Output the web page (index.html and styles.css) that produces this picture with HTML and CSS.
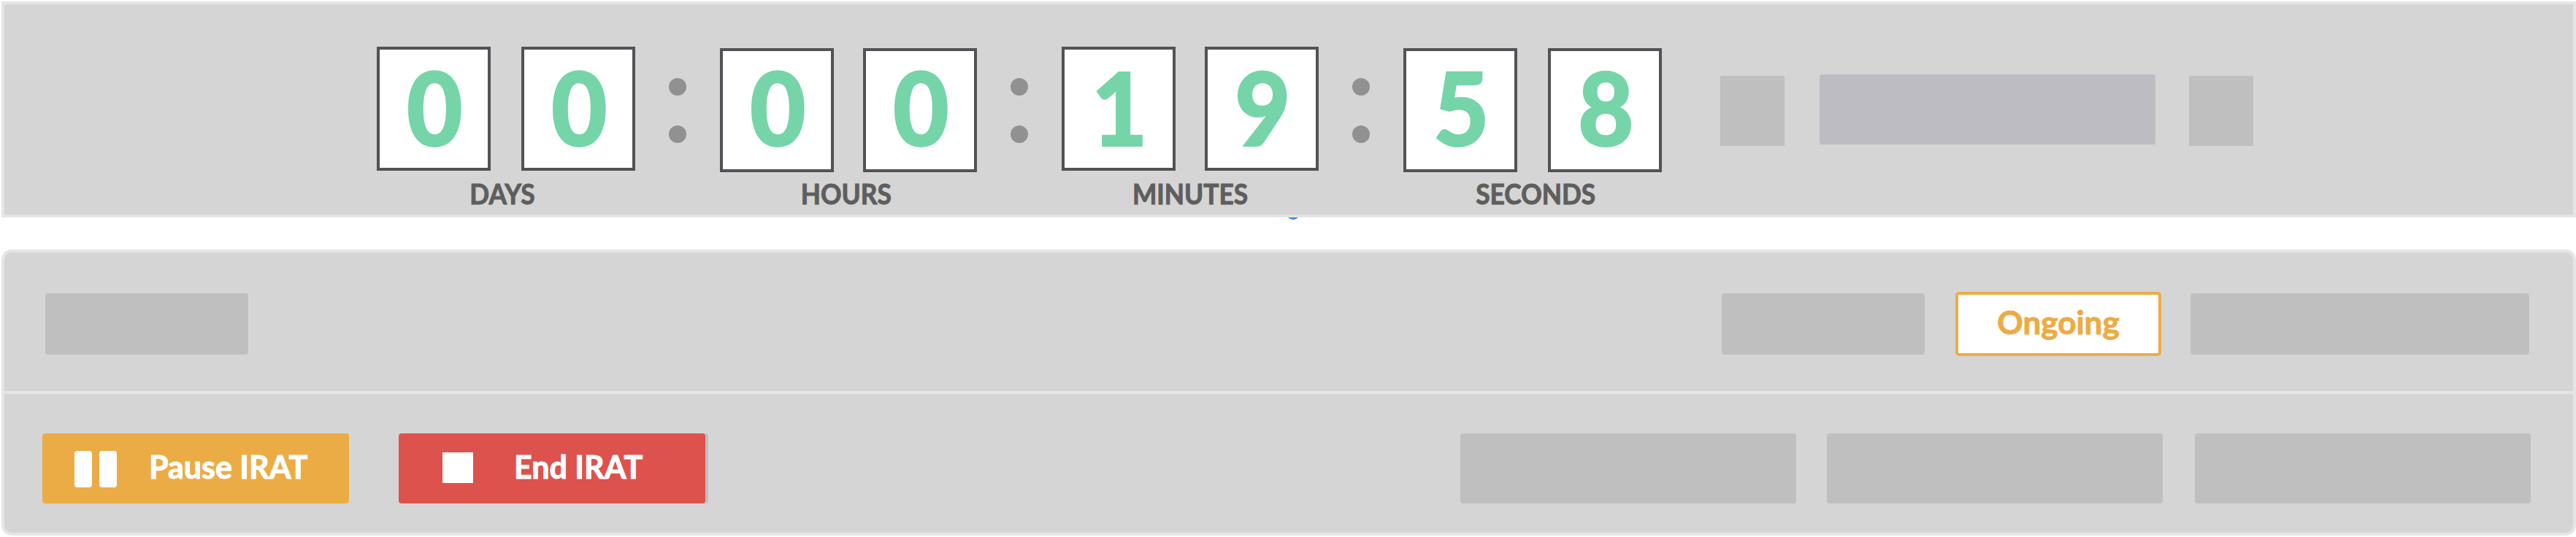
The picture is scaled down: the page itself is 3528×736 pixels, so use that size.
FILE: index.html
```html
<!DOCTYPE html>
<html lang="en">
<head>
    <meta charset="UTF-8">
    <meta name="viewport" content="width=device-width, initial-scale=1.0">
    <title>IRAT Timer</title>
    <link rel="stylesheet" href="styles.css">
</head>
<body>
    <div class="timer-panel">
        <div class="group days">
            <div class="digits">
                <div class="digit"><span>0</span></div>
                <div class="digit"><span>0</span></div>
            </div>
            <div class="label"><span>DAYS</span></div>
        </div>
        <div class="separator"><i></i><i></i></div>
        <div class="group hours low">
            <div class="digits">
                <div class="digit"><span>0</span></div>
                <div class="digit"><span>0</span></div>
            </div>
            <div class="label"><span>HOURS</span></div>
        </div>
        <div class="separator"><i></i><i></i></div>
        <div class="group minutes">
            <div class="digits">
                <div class="digit"><span>1</span></div>
                <div class="digit"><span>9</span></div>
            </div>
            <div class="label"><span>MINUTES</span></div>
        </div>
        <div class="separator"><i></i><i></i></div>
        <div class="group seconds low">
            <div class="digits">
                <div class="digit"><span>5</span></div>
                <div class="digit"><span>8</span></div>
            </div>
            <div class="label"><span>SECONDS</span></div>
        </div>
        <div class="adjust">
            <div class="block square"></div>
            <div class="block input"></div>
            <div class="block square"></div>
        </div>
    </div>

    <div class="marker"><i></i></div>

    <div class="control-panel">
        <div class="row status-row">
            <div class="block small"></div>
            <div class="right">
                <div class="block small"></div>
                <div class="status"><span>Ongoing</span></div>
                <div class="block large"></div>
            </div>
        </div>
        <div class="row button-row">
            <button class="btn pause">
                <svg width="58" height="50" viewBox="0 0 58 50">
                    <rect width="24" height="50" rx="4" fill="#fff"/>
                    <rect x="34" width="24" height="50" rx="4" fill="#fff"/>
                </svg>
                <span>Pause IRAT</span>
            </button>
            <button class="btn end">
                <svg width="42" height="42" viewBox="0 0 42 42">
                    <rect width="42" height="42" fill="#fff"/>
                </svg>
                <span>End IRAT</span>
            </button>
            <div class="right">
                <div class="block action"></div>
                <div class="block action"></div>
                <div class="block action last"></div>
            </div>
        </div>
    </div>
</body>
</html>
```
FILE: styles.css
```css
* {
    box-sizing: border-box;
}
body {
    margin: 0;
    padding: 2px 0 0 2px;
    height: 736px;
    overflow: hidden;
    background-color: white;
    font-family: Lato, sans-serif;
    font-weight: bold;
}
.timer-panel {
    display: flex;
    align-items: flex-start;
    height: 296px;
    padding: 58px 0 0 510px;
    border: 4px solid #e5e5e5;
    background-color: #d5d5d5;
}
.digits {
    display: flex;
    gap: 40px;
}
.days .digits, .seconds .digits {
    gap: 42px;
}
.digit {
    width: 156px;
    height: 170px;
    border: 4px solid #525256;
    background-color: white;
    color: #75d5a8;
    font-size: 139px;
    font-weight: 900;
    line-height: 158px;
    text-align: center;
    -webkit-text-stroke: 2px #75d5a8;
}
.digit span {
    display: inline-block;
    margin-left: 2px;
    transform: scaleX(0.95);
}
.low .digits {
    padding-top: 2px;
}
.low .digit {
    line-height: 154px;
}
.label {
    height: 46px;
    margin-top: 8px;
    color: #5e5e5e;
    font-size: 38px;
    line-height: 46px;
    text-align: center;
    -webkit-text-stroke: 1px #5e5e5e;
}
.low .label {
    margin-top: 6px;
}
.label span, .status span, .btn span {
    display: inline-block;
}
.label span {
    transform: scaleX(0.93);
}
.days .label {
    padding-right: 10px;
}
.hours .label {
    padding-right: 6px;
}
.seconds .label {
    padding-left: 8px;
}
.separator {
    display: flex;
    flex-direction: column;
    align-items: center;
    gap: 41px;
    width: 116px;
    padding-top: 43px;
}
.separator i {
    width: 24px;
    height: 24px;
    border-radius: 50%;
    background-color: #919191;
}
.adjust {
    display: flex;
    align-items: center;
    height: 96px;
    margin: 40px 0 0 80px;
}
.block {
    height: 84px;
    border-radius: 4px;
    background-color: #bfbfbf;
}
.square {
    width: 88px;
    height: 96px;
    border-radius: 0;
}
.input {
    width: 460px;
    height: 96px;
    margin: -4px 46px 0 48px;
    background-color: #bdbcc2;
}
/* only the bottom edge of the dot shows below the timer */
.marker {
    height: 44px;
    overflow: hidden;
}
.marker i {
    display: block;
    width: 20px;
    height: 20px;
    margin: -17px 0 0 1759px;
    border-radius: 50%;
    background-color: #3b82f6;
}
.control-panel {
    height: 392px;
    border: 4px solid #e5e5e5;
    border-radius: 14px;
    background-color: #d5d5d5;
}
.row {
    display: flex;
    align-items: center;
}
.right {
    display: flex;
    align-items: center;
    margin-left: auto;
}
.status-row {
    height: 194px;
    padding: 6px 60px 0 56px;
    border-bottom: 4px solid #e5e5e5;
}
.small {
    width: 278px;
}
.status {
    width: 282px;
    height: 88px;
    margin: 0 40px 0 42px;
    border: 4px solid #ecac45;
    border-radius: 5px;
    background-color: white;
    color: #ecac45;
    font-size: 44px;
    line-height: 74px;
    text-align: center;
    -webkit-text-stroke: 1px #ecac45;
}
.large {
    width: 464px;
}
.button-row {
    align-items: flex-start;
    height: 190px;
    padding: 54px 58px 0 52px;
}
.btn {
    display: flex;
    align-items: center;
    width: 420px;
    height: 96px;
    padding: 0;
    border: none;
    border-radius: 4px;
    color: white;
    font-family: inherit;
    font-size: 43px;
    font-weight: bold;
    line-height: 90px;
    text-align: left;
    white-space: nowrap;
    -webkit-text-stroke: 1px white;
}
.pause {
    padding: 2px 0 0 44px;
    background-color: #ecac45;
}
.pause span {
    margin: -6px 0 0 44px;
}
.end {
    margin-left: 68px;
    padding: 0 0 2px 60px;
    background-color: #de524d;
    box-shadow: 4px 0 0 #bfbfbf;
}
.end span {
    margin: -2px 0 0 56px;
}
.action {
    width: 460px;
    height: 96px;
    margin-left: 42px;
}
.last {
    margin-left: 44px;
}
```
